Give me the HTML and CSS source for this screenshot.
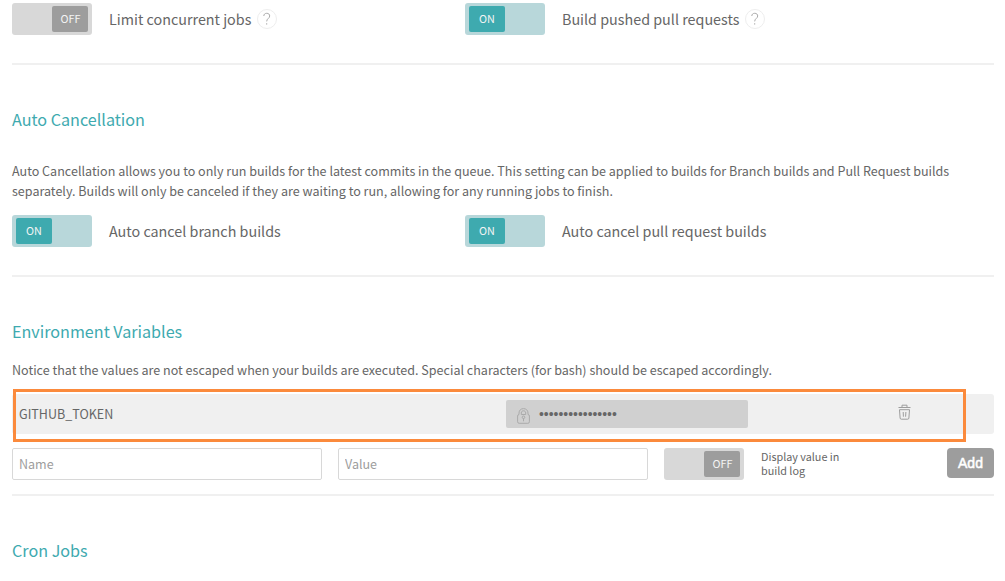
FILE: index.html
```html
<!DOCTYPE html>
<html lang="en">
<head>
<meta charset="utf-8">
<title>Settings</title>
<link rel="stylesheet" href="styles.css">
</head>
<body>
<main class="settings">
  <section class="section general">
    <div class="options">
      <div class="option"><span class="toggle"><span class="knob">OFF</span></span><span class="label">Limit concurrent jobs</span><span class="help"><svg viewBox="0 0 18 18"><path d="M5.800 6C5.900 4.200 7 3.300 8.700 3.300C10.500 3.300 11.700 4.300 11.700 6C11.700 8.400 8.700 8.600 8.700 11.400M8.700 13.200V14.600"/></svg></span></div>
      <div class="option"><span class="toggle on"><span class="knob">ON</span></span><span class="label">Build pushed pull requests</span><span class="help"><svg viewBox="0 0 18 18"><path d="M5.800 6C5.900 4.200 7 3.300 8.700 3.300C10.500 3.300 11.700 4.300 11.700 6C11.700 8.400 8.700 8.600 8.700 11.400M8.700 13.200V14.600"/></svg></span></div>
    </div>
  </section>
  <section class="section cancellation">
    <h2>Auto Cancellation</h2>
    <p>Auto Cancellation allows you to only run builds for the latest commits in the queue. This setting can be applied to builds for Branch builds and Pull Request builds<br>separately. Builds will only be canceled if they are waiting to run, allowing for any running jobs to finish.</p>
    <div class="options">
      <div class="option"><span class="toggle on"><span class="knob">ON</span></span><span class="label">Auto cancel branch builds</span></div>
      <div class="option"><span class="toggle on"><span class="knob">ON</span></span><span class="label">Auto cancel pull request builds</span></div>
    </div>
  </section>
  <section class="section variables">
    <h2>Environment Variables</h2>
    <p>Notice that the values are not escaped when your builds are executed. Special characters (for bash) should be escaped accordingly.</p>
    <div class="variable">
      <span class="variable-name">GITHUB_TOKEN</span>
      <span class="secret">
        <svg class="lock" viewBox="0 0 13 16"><path d="M2 6.500V5C2 2.300 4 .6 6.500 .6S11 2.300 11 5V6.500M4.300 6.500V5C4.300 3.600 5.200 2.800 6.500 2.800S8.700 3.600 8.700 5V6.500M4.300 6.500H8.700M2 6.500Q.6 6.700 .6 8V13.700Q.6 15.300 2.200 15.300H10.800Q12.400 15.300 12.400 13.700V8Q12.400 6.700 11 6.500M6.500 10.500V13.300"/><circle cx="6.500" cy="9.300" r="1.300"/></svg>
        <span class="dots">••••••••••••••••</span>
      </span>
      <svg class="trash" viewBox="0 0 13 16"><path d="M.5 3.500H12.500M4 3V1.200H9V3M1.500 5.700H11.500L10.900 14Q10.800 15.200 9.700 15.200H3.300Q2.200 15.200 2.100 14ZM5.200 8L5.400 12.700M7.900 8L7.600 12.700"/></svg>
      <span class="highlight"></span>
    </div>
    <form class="new-variable">
      <input type="text" placeholder="Name">
      <input type="text" placeholder="Value">
      <span class="toggle"><span class="knob">OFF</span></span>
      <span class="hint">Display value in<br>build log</span>
      <button type="button">Add</button>
    </form>
  </section>
  <section class="cron"><h2>Cron Jobs</h2></section>
</main>
</body>
</html>
```
FILE: styles.css
```css
* { box-sizing: border-box; }
body {
  margin: 0;
  background: #fff;
  color: #666;
  font-family: "Noto Sans CJK SC", "Noto Sans", sans-serif;
  overflow: hidden;
}
.settings { width: 982px; margin-left: 12px; padding-top: 3px; }
.section { border-bottom: 2px solid #f0f0f0; }
.general { height: 62px; }
.cancellation { height: 212px; padding-top: 39px; }
.variables { height: 219px; padding-top: 39px; }
.cron { padding-top: 39px; }
h2 { margin: 0; font-size: 16.15px; line-height: 30px; font-weight: 400; color: #3eaaaf; }
p { margin: 0; font-size: 12.55px; line-height: 20px; white-space: nowrap; }
.cancellation p { margin: 27px 0 14px; }
.variables p { margin: 14px 0 14px; }
.options { display: grid; grid-template-columns: 453px 1fr; }
.option { display: flex; align-items: center; height: 32px; }
.toggle { display: flex; flex: none; justify-content: flex-end; width: 80px; height: 32px; padding: 3px 4px; border-radius: 3px; background: #d8d8d8; }
.toggle.on { justify-content: flex-start; background: #b8d7da; }
.knob { width: 36px; height: 26px; padding-left: 1px; border-radius: 2px; background: #9d9d9d; color: #f4f4f4; font-size: 10.8px; line-height: 25px; text-align: center; }
.on .knob { padding-left: 0; background: #3eaaaf; }
.label { margin-left: 17px; font-size: 14.33px; line-height: 24px; white-space: nowrap; }
.help { width: 20px; height: 20px; margin-left: 5.6px; border: 1px solid #eee; border-radius: 50%; }
.help svg { display: block; width: 18px; height: 18px; fill: none; stroke: #aaa; stroke-width: 1; }
.variable { position: relative; display: flex; align-items: center; height: 40px; padding-left: 7px; border-radius: 3px; background: #f0f0f0; }
.variable-name { width: 487px; font-size: 12.54px; line-height: 20px; }
.secret { display: flex; align-items: center; width: 242px; height: 28px; padding-left: 11px; border-radius: 2px; background: #d0d0d0; }
.lock { width: 13px; height: 16px; margin-top: 4px; fill: none; stroke: #aaa; stroke-width: 1; }
.dots { margin-left: 9px; font: 13.9px/20px "Liberation Sans", sans-serif; }
.trash { width: 13px; height: 16px; margin: -4px 0 0 150px; fill: none; stroke: #9d9d9d; stroke-width: 1; }
.highlight { position: absolute; left: 1px; top: -5px; width: 953px; height: 53px; border: 3px solid #fb8a3c; }
.new-variable { display: flex; height: 32px; margin-top: 14px; }
input { width: 310px; height: 32px; margin: 0 16px 0 0; padding: 0 6px 2px; border: 1px solid #d8d8d8; border-radius: 2px; font: 12.54px/20px "Noto Sans CJK SC", sans-serif; }
input::placeholder { color: #9d9d9d; opacity: 1; }
.hint { margin: 1px 0 0 17px; font-size: 10.8px; line-height: 14px; white-space: nowrap; }
button { width: 47px; height: 30px; margin-left: auto; padding: 0; border: 0; border-radius: 4px; background: #9d9d9d; color: #fff; font: 14px "Liberation Sans", sans-serif; -webkit-text-stroke: .5px #fff; }
```
